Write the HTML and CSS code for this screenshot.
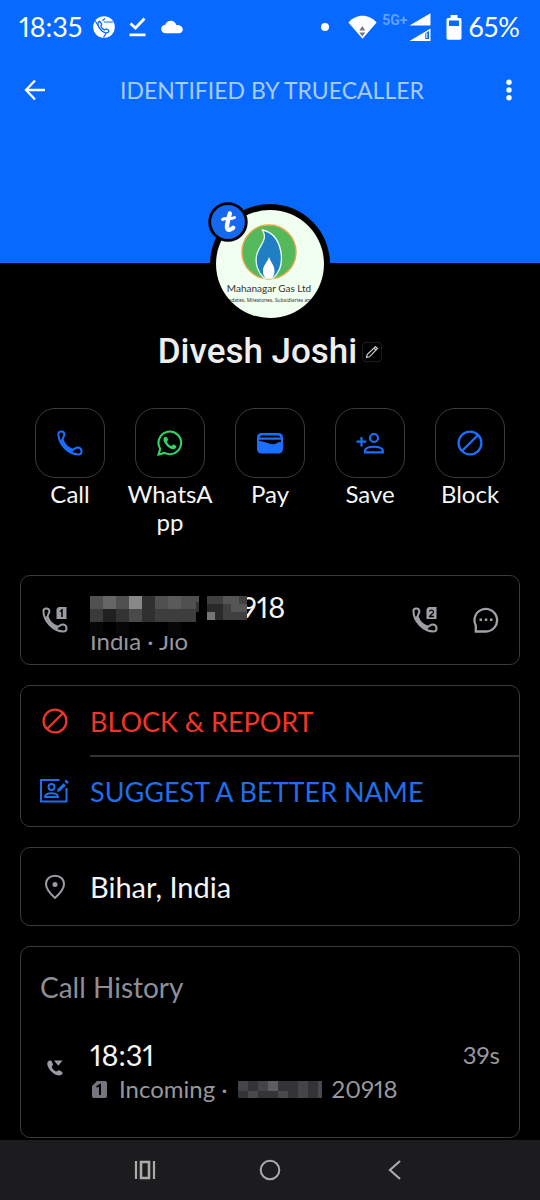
FILE: index.html
```html
<!DOCTYPE html>
<html lang="en">
<head>
<meta charset="utf-8">
<meta name="viewport" content="width=device-width, initial-scale=1">
<title>Divesh Joshi</title>
<link rel="stylesheet" href="styles.css">
</head>
<body>
<svg class="defs" aria-hidden="true">
  <symbol id="phone" viewBox="0 0 26 26">
    <path d="M1.4 4C1.4 1 6.8 .2 7.4 4C7.6 6.3 5.6 7.6 5.6 9.6C7 14 11 18.2 15.6 19.8C17.2 19.6 18.6 17.4 21.2 17.6C25.600 18.200 25.400 24.200 22 24.500C11 24.500 1.600 14 1.400 4Z" fill="none" stroke="currentColor" stroke-width="2" stroke-linejoin="round"/>
    <path d="M4 9.500C6 15 10.500 19.800 16 21.500" fill="none" stroke="currentColor" stroke-width="2"/>
  </symbol>
  <symbol id="ban" viewBox="0 0 26 26">
    <path d="M13 1.600a11.400 11.400 0 1 0 0 22.800a11.400 11.400 0 1 0 0-22.800M5.200 20.800L20.800 5.200" fill="none" stroke="currentColor" stroke-width="2.300"/>
  </symbol>
</svg>

<header class="hero">
  <div class="status">
    <span class="clock">18:35</span>
    <svg width="22" height="22" viewBox="0 0 22 22"><circle cx="11" cy="11" r="10.8" fill="#fff"/><path d="M11 6H20M6.5 12L2 4.5M15 14L10.5 21.5" stroke="#0769ff" stroke-width="1.2"/><path d="M6.3 5.2C5 6 4.6 8 5.6 10.6C7 14 10.5 16.8 13.5 16.8C15.6 16.6 16.2 15.2 15.6 14.3L13.4 13C12.3 12.7 12 14 11 13.8C9.5 13 8.3 11.5 7.9 10.2C8 9.3 9 9 8.5 7.6Z" fill="#fff" stroke="#0769ff" stroke-width="1.3"/><path d="M9.5 4.8L12 2.5" stroke="#0769ff" stroke-width="1.2"/></svg>
    <svg class="tick" width="18" height="20" viewBox="0 0 18 20" fill="none" stroke="#fff" stroke-width="2.8"><path d="M1.5 6.5L6.5 11L15.5 1.5M.5 17.8H16.5"/></svg>
    <svg class="cloud" width="22" height="14" viewBox="0 0 22 14"><path d="M5 13.2C1.8 13.2.2 11.3.2 8.9C.2 6.5 2 4.9 4.2 4.7C5.2 2 7.2.7 9.6.7C12.6.7 14.8 2.7 15.4 5.1C18.6 4.8 21.8 6.5 21.8 9.5C21.8 11.7 20.2 13.2 17.8 13.2Z" fill="#fff"/></svg>
    <svg class="dot" width="8" height="8" viewBox="0 0 8 8"><circle cx="4" cy="4" r="4" fill="#fff"/></svg>
    <svg class="wifi" width="29" height="24" viewBox="0 0 29 24"><path d="M.4 7.5C8-1.5 21-1.5 28.6 7.5L14.5 23.8Z" fill="#fff"/><path d="M11.3 15.5L14.3 11L17.3 15.5ZM11.3 17.5H17.3L14.3 21.5Z" fill="#777"/></svg>
    <span class="net">5G+</span>
    <svg class="signal" width="22" height="29" viewBox="0 0 22 29"><path d="M.5 12.5L21.5.2V12.5ZM.5 28L21.5 15.5V28Z" fill="#fff"/><path d="M16.3 20.2L20 18V26H16.3Z" fill="#0769ff"/><path d="M17.8 20V25" stroke="#fff"/></svg>
    <svg class="battery" width="16" height="25" viewBox="0 0 16 25"><path d="M4.5 0H11.5V3H14Q15.5 3 15.5 4.5V23Q15.5 24.8 14 24.8H2Q.5 24.8.5 23V4.5Q.5 3 2 3H4.5Z" fill="#fff"/><path d="M3 5.5H13V11H3Z" fill="#0769ff"/></svg>
    <span>65%</span>
  </div>
  <div class="appbar">
    <button class="plain" aria-label="Back"><svg width="22" height="22" viewBox="0 0 22 22" fill="none" stroke="#fff" stroke-width="2.3"><path d="M11 1.5L2 11L11 20.5M2 11H21"/></svg></button>
    <p>IDENTIFIED BY TRUECALLER</p>
    <button class="plain" aria-label="More options"><svg width="22" height="22" viewBox="0 0 22 22" fill="#fff"><circle cx="11" cy="3.3" r="2.7"/><circle cx="11" cy="11" r="2.7"/><circle cx="11" cy="18.7" r="2.7"/></svg></button>
  </div>
</header>

<main>
  <div class="avatar">
    <svg class="photo" width="108" height="108" viewBox="0 0 108 108" role="img" aria-label="Mahanagar Gas Ltd">
      <clipPath id="round"><circle cx="54" cy="54" r="54"/></clipPath>
      <g clip-path="url(#round)">
        <rect width="108" height="108" fill="#f1fff0"/>
        <circle cx="53" cy="42" r="27" fill="#54b95a" stroke="#e6a54a" stroke-width="1.4"/>
        <path d="M46.500 20C56 22 62 29 64.500 40C67 52 64 62 57 68H48C42 63 39 54 40.500 46C42 38 48 33 48.500 27C48.500 24 47.500 22 46.500 20Z" fill="#1f7fc2" stroke="#e9fff5" stroke-width="1.300"/>
        <path d="M53 47C54.500 52 58.500 55 58.500 61C58.500 66 56 68.500 53 68.500C49 68.500 46.500 65 47 60C47.500 55 51.500 52 53 47Z" fill="#fff"/>
        <text x="53" y="82" text-anchor="middle" class="brand">Mahanagar Gas Ltd</text>
        <text x="53" y="92" text-anchor="middle" class="motto">Updates, Milestones, Subsidiaries and</text>
      </g>
    </svg>
    <svg class="badge" width="40" height="40" viewBox="0 0 40 40" aria-hidden="true"><circle cx="20" cy="20" r="18.300" fill="#1668ee" stroke="#000" stroke-width="2.800"/><path d="M21.800 11.500C20.500 17 18.800 22 19 25.500C19.500 29 23 28 25.200 25.800" fill="none" stroke="#fff" stroke-width="4.400" stroke-linecap="round"/><path d="M14.500 17.500C18 15 22 18 26.500 15.500" fill="none" stroke="#fff" stroke-width="3" stroke-linecap="round"/></svg>
  </div>
  <div class="name">
    <h1>Divesh Joshi</h1>
    <button class="edit" aria-label="Edit name"><svg width="14" height="14" viewBox="0 0 14 14" fill="none" stroke="#ccc" stroke-width="1.200"><path d="M1.500 12.500L2.200 9.500L10.500 1.500L12.500 3.500L4.500 11.800ZM9 3L11 5"/></svg></button>
  </div>

  <nav class="actions" aria-label="Contact actions">
    <button class="action"><span class="tile"><svg width="26" height="26"><use href="#phone"/></svg></span><span class="label">Call</span></button>
    <button class="action"><span class="tile green"><svg width="26" height="26" viewBox="0 0 26 26"><path d="M1.500 24.500L3.200 18.800A11.300 11.300 0 1 1 7.600 22.900Z" fill="none" stroke="currentColor" stroke-width="2.100"/><path d="M8.500 6.800C6.300 7.500 5.900 9.800 7.200 12.300C9.200 16 12.500 18.700 16 19.300C18.300 19.200 19.700 17.700 19.400 16L16.700 14.400C15.500 14.200 15.300 16 14.200 16C12.300 15.300 10.700 13.800 9.900 12C10 11 11.300 10.700 11 9.600L10 7.200Z" fill="currentColor"/></svg></span><span class="label">WhatsApp</span></button>
    <button class="action"><span class="tile"><svg width="26" height="26" viewBox="0 0 26 26"><rect y="3" width="26" height="20.500" rx="4.500" fill="currentColor"/><path d="M2.500 7.500Q3 5.500 5 5.500H21Q23 5.500 23.500 7.500Z" fill="#000"/><path d="M2 9.800H24V12C21 11.300 19 14.300 16 14.200C11 14 9 11.500 2 11Z" fill="#000"/></svg></span><span class="label">Pay</span></button>
    <button class="action"><span class="tile"><svg width="28" height="26" viewBox="0 0 28 26" fill="none" stroke="currentColor" stroke-width="2.200"><path d="M5.500 7V16.500M.5 11.700H10.300M9 22.300V20.500C10 15.500 26 15.500 26.800 20.500V22.300Z"/><circle cx="18" cy="8" r="4"/></svg></span><span class="label">Save</span></button>
    <button class="action"><span class="tile"><svg width="26" height="26"><use href="#ban"/></svg></span><span class="label">Block</span></button>
  </nav>

  <div class="cards">
    <section class="card number">
      <svg class="lead" width="26" height="26" viewBox="0 0 26 26"><use href="#phone"/><path d="M16.500 0H24.500V12H14.500V2Z" fill="currentColor"/><path d="M18 4.500L20 3V10" fill="none" stroke="#000" stroke-width="1.500"/></svg>
      <div class="who">
        <p class="main">918</p>
        <p class="sub">India · Jio</p>
        <svg class="mosaic" width="159" height="40" viewBox="0 0 159 40" shape-rendering="crispEdges" aria-hidden="true">
          <path d="M0 0H157V24H159V40H0Z" fill="#000"/>
          <path d="M0 0H109V13H0Z" fill="#505050"/><path d="M13 0H26V13H13Z" fill="#666"/><path d="M39 0H52V13H39Z" fill="#888"/><path d="M52 0H65V26H52Z" fill="#303030"/><path d="M78 0H91V13H78Z" fill="#5a5a5a"/>
          <path d="M0 13H13V26H0Z" fill="#3a3a3a"/><path d="M13 13H26V26H13Z" fill="#202020"/><path d="M26 13H39V26H26Z" fill="#333"/><path d="M39 13H52V26H39Z" fill="#4a4a4a"/><path d="M65 13H106V26H65Z" fill="#3d3d3d"/><path d="M106 6H109V16H106Z" fill="#333"/>
          <path d="M117 0H157V24H117Z" fill="#404040"/><path d="M133 0H149V8H133ZM141 8H149V16H141ZM149 8H157V16H149Z" fill="#555"/><path d="M117 8H133V16H117ZM125 16H133V24H125Z" fill="#292929"/><path d="M117 16H125V24H117Z" fill="#747474"/>
          <path d="M0 26H13V40H0ZM26 26H39V40H26ZM78 26H91V40H78Z" fill="#070708"/>
        </svg>
      </div>
      <button class="plain" aria-label="Call with SIM 2"><svg width="26" height="26" viewBox="0 0 26 26"><use href="#phone"/><path d="M16.500 0H24.500V12H14.500V2Z" fill="currentColor"/><path d="M17.500 4.500C18 2.500 21.500 2.500 21.500 5C21.500 6.500 18.500 7.500 17.700 9.500H22" fill="none" stroke="#000" stroke-width="1.300"/></svg></button>
      <button class="plain" aria-label="Message"><svg width="26" height="26" viewBox="0 0 26 26"><path d="M2.800 24.500V18.500A11.300 11.300 0 1 1 13 24.500Z" fill="none" stroke="currentColor" stroke-width="2.300"/><path d="M6.500 11.500h2.500v2.500H6.500ZM11.800 11.500h2.500v2.500H11.800ZM17 11.500h2.500v2.500H17Z" fill="currentColor"/></svg></button>
    </section>

    <section class="card links">
      <button class="row red"><svg class="lead" width="26" height="26"><use href="#ban"/></svg><span>BLOCK &amp; REPORT</span></button>
      <button class="row blue"><svg class="lead" width="30" height="26" viewBox="0 0 30 26" fill="none" stroke="currentColor" stroke-width="2"><path d="M19.500 2H1V23.500H26.500V10"/><circle cx="11.500" cy="9" r="3"/><path d="M5 19C5.500 14 17.500 14 18 19Z"/><path d="M17 14L17.700 11L23.500 5.200L25.800 7.500L20 13.300Z" fill="currentColor" stroke="none"/><path d="M25.300 2.500L28 5.200" stroke-width="2.500"/></svg><span>SUGGEST A BETTER NAME</span></button>
    </section>

    <section class="card place">
      <svg class="lead" width="26" height="26" viewBox="0 0 26 26"><path d="M13 24C8 19.500 4 15 4 10.300C4 5 8 1.800 13 1.800S22 5 22 10.300C22 15 18 19.500 13 24Z" fill="none" stroke="currentColor" stroke-width="2"/><circle cx="13" cy="10.500" r="2.500" fill="currentColor"/></svg>
      <p class="main">Bihar, India</p>
    </section>

    <section class="card history">
      <h2>Call History</h2>
      <div class="entry">
        <svg class="lead" width="26" height="26" viewBox="0 0 26 26"><path d="M7.500 5.500C5 6.500 4.800 9 6.200 12C8.300 16.500 12.500 20.300 17.500 20.500C20 20.300 21 18.500 20.300 17L17 15.200C15.500 15 15.200 16.700 13.800 16.400C11.800 15.500 10.500 14 9.800 12.300C10 10.700 11.300 10.500 10.800 9L9.500 5.800Z" fill="currentColor"/><path d="M12 5.500H20.500L16.300 10.800Z" fill="currentColor"/></svg>
        <div class="call">
          <p class="main">18:31</p>
          <p class="sub"><svg class="sim" width="15" height="17" viewBox="0 0 15 17"><path d="M5 0H13Q15 0 15 2V15Q15 17 13 17H2Q0 17 0 15V5Z" fill="#74757e"/><path d="M4.500 6L8 4V14" fill="none" stroke="#000" stroke-width="2"/></svg><span>Incoming ·</span>
            <svg width="84" height="17" viewBox="0 0 84 17" shape-rendering="crispEdges" aria-hidden="true"><path d="M0 0H84V17H0Z" fill="#343437"/><path d="M0 0H10V10H0ZM20 0H30V10H20ZM60 0H70V17H60Z" fill="#454549"/><path d="M30 0H40V10H30Z" fill="#5c5c61"/><path d="M10 10H20V17H10ZM40 10H50V17H40ZM80 0H84V17H80Z" fill="#48484d"/></svg><span>20918</span></p>
        </div>
        <span class="duration">39s</span>
      </div>
    </section>
  </div>
</main>

<footer class="system" aria-label="System navigation">
  <button class="plain" aria-label="Recent apps"><svg width="22" height="22" viewBox="0 0 22 22" fill="none" stroke="currentColor" stroke-width="2.200"><path d="M2 2V20M20 2V20"/><path d="M7 3H15V19H7Z" stroke-width="2.600"/></svg></button>
  <button class="plain" aria-label="Home"><svg width="22" height="22" viewBox="0 0 22 22" fill="none" stroke="currentColor" stroke-width="2"><circle cx="11" cy="11" r="9.300"/></svg></button>
  <button class="plain" aria-label="Back"><svg width="22" height="22" viewBox="0 0 22 22" fill="none" stroke="currentColor" stroke-width="2.200"><path d="M16 2L6 11L16 20"/></svg></button>
</footer>
</body>
</html>
```
FILE: styles.css
```css
* { box-sizing: border-box; }
body {
  margin: 0;
  min-height: 100vh;
  display: flex;
  flex-direction: column;
  background: #000;
  color: #f5f5f5;
  font-family: Lato, "Open Sans", sans-serif;
  font-variant-numeric: proportional-nums;
}
h1, h2, p { margin: 0; font-weight: 400; }
svg { display: block; flex: none; }
button { font: inherit; color: inherit; background: none; border: 0; padding: 0; }
.defs { position: absolute; width: 0; height: 0; }

.hero { height: 263px; background: #0769ff; color: #fff; }
.status {
  display: flex;
  align-items: center;
  height: 54px;
  padding: 0 20px 0 19px;
  font-size: 27px;
  line-height: 32px;
}
.clock { min-width: 66px; margin-right: 8px; }
.tick { margin-left: 14px; }
.cloud { margin-left: 14px; }
.dot { margin-left: auto; margin-right: 19px; }
.wifi { margin-right: 5px; }
.net { font: 700 14px/16px Roboto, sans-serif; color: #62a0ff; margin-bottom: 14px; }
.signal { margin-left: 2px; margin-right: 15px; }
.battery { margin-right: 6px; }
.appbar {
  display: flex;
  align-items: center;
  justify-content: space-between;
  height: 71px;
  padding: 0 20px 0 24px;
  font-size: 23px;
  color: #a9ccff;
}

.avatar {
  position: relative;
  width: 120px;
  margin: -59px auto 0;
  padding: 6px;
  border-radius: 50%;
  background: #000;
}
.badge { position: absolute; left: -2px; top: -2px; }
.brand { font: 10px Lato, sans-serif; fill: #333; }
.motto { font: 5px "Noto Sans", sans-serif; fill: #333; }
.name {
  display: flex;
  align-items: center;
  justify-content: center;
  gap: 5px;
  margin-top: 8px;
}
.name h1 { font: 500 35px/40px Roboto, sans-serif; color: #eee; }
.edit { display: grid; place-items: center; width: 20px; height: 20px; border: 1px solid #1c1c1c; border-radius: 4px; }

.actions {
  display: grid;
  grid-template-columns: repeat(5, 1fr);
  margin: 36px 20px 0;
}
.action { display: flex; flex-direction: column; align-items: center; }
.tile {
  display: grid;
  place-items: center;
  width: 70px;
  height: 70px;
  border: 1px solid #3a3a3a;
  border-radius: 20px;
  color: #1a6fff;
}
.green { color: #2fd566; }
.label { max-width: 90px; margin-top: 2px; font-size: 24px; line-height: 28px; overflow-wrap: anywhere; }

.cards { display: flex; flex-direction: column; gap: 20px; padding: 39px 20px 2px; }
.card { border: 1px solid #3a3a3a; border-radius: 10px; }
.lead { width: 30px; color: #9a9ca3; }
.main { font-size: 29px; line-height: 34px; }
.sub { font-size: 24px; line-height: 34px; color: #97979d; }

.number { display: flex; align-items: center; gap: 35px; height: 90px; padding: 0 20px 0 19px; color: #a0a1a7; }
.number .lead { margin-right: -15px; }
.who { position: relative; flex: 1; padding-top: 8px; }
.number .main { padding-left: 151px; color: #f5f5f5; }
.mosaic { position: absolute; left: 0; top: 14px; }

.row { display: flex; align-items: center; width: 100%; height: 70px; padding-left: 19px; font-size: 27px; gap: 20px; }
.row .lead { color: inherit; }
.row span { flex: 1; height: 71px; line-height: 72px; text-align: left; }
.red { color: #f03529; }
.red span { border-bottom: 2px solid #333; }
.blue { color: #216ee8; }

.place { display: flex; align-items: center; gap: 20px; height: 79px; padding: 0 19px; }

.history { height: 192px; padding: 23px 19px; }
.history h2 { font-size: 28px; line-height: 34px; color: #8e8e96; }
.entry { display: flex; align-items: flex-start; gap: 20px; margin-top: 34px; }
.entry .lead { margin-top: 17px; }
.call { flex: 1; }
.call .sub { display: flex; align-items: center; gap: 10px; }
.sim { margin: 0 2px; }
.duration { font-size: 24px; line-height: 34px; color: #97979d; }

.system {
  display: flex;
  justify-content: center;
  align-items: center;
  gap: 103px;
  height: 60px;
  margin-top: auto;
  background: #1c1c1e;
  color: #aaa;
}
```
